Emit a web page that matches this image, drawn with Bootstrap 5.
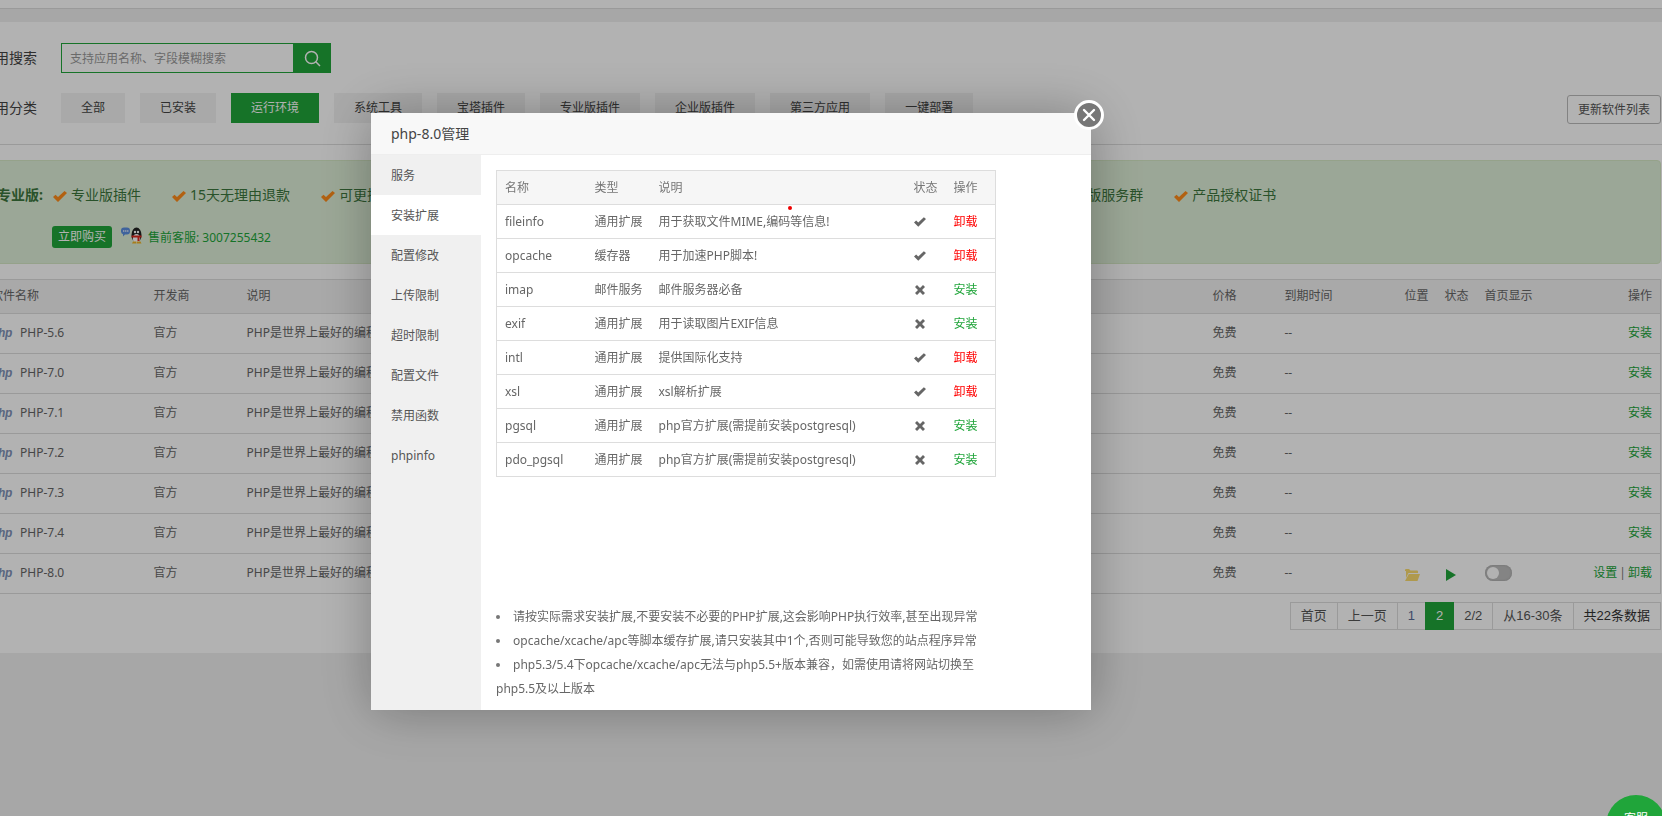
<!DOCTYPE html>
<html lang="zh-CN">
<head>
<meta charset="utf-8">
<title>软件商店</title>
<link href="https://cdn.jsdelivr.net/npm/bootstrap@5.3.0/dist/css/bootstrap.min.css" rel="stylesheet">
<style>
html,body{height:100%;overflow:hidden}
body{background:#f0f0f0;color:#666;font-family:"Noto Sans","Noto Sans CJK SC",sans-serif;font-size:12px;line-height:1.5}
.shell{width:1682px;margin-left:-20px}
.topwrap{height:22px;background:#fff;padding-top:8px}
.topstrip-in{height:14px;background:#f0f0f0;border-top:1px solid #ddd}
.panelmain{background:#fff;padding:21px 1px 23px 2px}
.rowlabel{width:55px;margin-right:24px;font-size:14px;line-height:30px;color:#444;white-space:nowrap;display:flex;justify-content:flex-end}
.catrow{margin-top:20px}
.searchbox{width:270px;height:30px}
.searchfield{width:232px;height:30px;border:1px solid #20a53a;border-right:0;padding:0 8px;line-height:29px;color:#999;background:#fff}
.searchbtn{width:38px;height:30px;background:#20a53a}
.catbtn{height:30px;line-height:30px;padding:0 20px;margin-right:15px;background:#f2f2f2;color:#444}
.catbtn.on{background:#20a53a;color:#fff}
.updbtn{height:29px;line-height:27px;padding:0 10px;margin:2px 0 0;border:1px solid #bbb;border-radius:3px;color:#555}
.sepline{height:1px;background:#ddd;margin:20px -2px 15px}
.promo{height:104px;background:#dff0d8;border:1px solid #d6e9c6;border-radius:4px;padding:22px 0 0 14px;color:#3c763d}
.promorow{font-size:14px;line-height:24px;height:24px}
.promolabel{font-weight:700;width:47px;white-space:nowrap;margin-right:9px}
.perk{margin-right:31px;white-space:nowrap}
.perk svg{width:14px;height:11px;margin-right:4px;fill:#ff8c1a}
.gapper{margin-left:616px}
.promorow2{margin:19px 0 0 55px;height:22px}
.buybtn{height:22px;line-height:22px;width:60px;text-align:center;background:#20a53a;border-radius:3px;color:#fff}
.qqmark{width:24px;height:17px;margin:1px 4px 0 8px}
.qqtext{color:#20a53a;line-height:24px;font-size:12px}
.sft-wrap{margin-top:15px}
.table.sft-table{--bs-table-bg:transparent;--bs-table-color:#666;border-collapse:collapse;table-layout:fixed;width:1679px;margin:0;border:1px solid #ddd}
.table.sft-table th,.table.sft-table td{padding:0 8px 2px;border:0;border-bottom:1px solid #ddd;font-weight:400;white-space:nowrap;overflow:hidden;color:#666;font-size:12px;vertical-align:middle}
.table.sft-table th{height:34px;background:#f2f2f2}
.table.sft-table td{height:40px}
.table.sft-table .okgreen,.okgreen{color:#20a53a}
.phpmark{display:inline-block;width:21px;margin-right:8px;font:italic 700 12px "Liberation Sans",sans-serif;color:#8293b8;white-space:nowrap;letter-spacing:-.3px}
.pipe{color:#777;margin:0 2px}
.foldicon{width:15px;height:12px;display:block;margin-top:5px}
.playicon{width:10px;height:12px;display:block;margin:5px 0 0 1px}
.togglebox{width:27px;height:16px;border-radius:8px;background:#bdbdbd;box-shadow:inset 0 0 2px #999;padding:2px}
.togglebox i{display:block;width:12px;height:12px;border-radius:50%;background:#fff}
.pagerwrap{margin-top:8px}
.pagination.pagerlist{--bs-pagination-font-size:13px;--bs-pagination-padding-x:10px;--bs-pagination-padding-y:0;--bs-pagination-border-color:#ddd;--bs-pagination-color:#555;--bs-pagination-bg:transparent;--bs-pagination-border-radius:0;--bs-pagination-active-bg:#20a53a;--bs-pagination-active-border-color:#20a53a;font-family:"Liberation Sans","Noto Sans CJK SC",sans-serif;line-height:26px}
.pagerlist .page-link{line-height:26px;height:28px;border-radius:0!important}
.pagerlist .bluecell{color:#5a6a95}
.pagerlist .darkcell{color:#333}
.fade-layer{position:fixed;inset:0;background:rgba(0,0,0,.3);z-index:10}
.dlg{position:fixed;left:371px;top:113px;width:720px;height:597px;background:#fff;z-index:20;box-shadow:1px 1px 50px rgba(0,0,0,.3)}
.dlghead{height:42px;line-height:41px;padding-left:20px;background:#f8f8f8;border-bottom:1px solid #eee;color:#444;font-size:14px}
.dlgbody{height:555px}
.sidemenu{width:110px;background:#f0f0f0}
.sideitem{height:40px;line-height:42px;padding-left:20px;color:#555}
.sideitem.on{background:#fff}
.dlgmain{width:610px;padding:15px 15px 9px;position:relative}
.table.ext-table{--bs-table-bg:transparent;border-collapse:collapse;table-layout:fixed;width:500px;margin:0;border:1px solid #ddd}
.table.ext-table th,.table.ext-table td{height:34px;padding:0 8px;border:0;border-bottom:1px solid #ddd;font-weight:400;font-size:12px;color:#666;white-space:nowrap;overflow:hidden;vertical-align:middle}
.table.ext-table th{background:#f6f6f6;color:#777}
.stat{width:12px;height:10px;display:block;fill:#666}
.stat.cross{width:10px;height:10px;margin-left:1px}
.table.ext-table .redtext{color:#f00}
.table.ext-table .inst{color:#20a53a}
.hintlist{list-style:inside disc;margin:0;padding:0;line-height:24px;color:#666;width:500px}
.hintlist li::marker{color:#777}
.reddot{position:absolute;left:307px;top:51px;width:4px;height:4px;border-radius:50%;background:#e00}
.closer{position:fixed;left:1074px;top:100px;width:30px;height:30px;z-index:30;border-radius:50%;background:#777;border:3px solid #fff}
.chatball{position:fixed;left:1606px;top:795px;width:60px;height:60px;z-index:30;border-radius:50%;background:#20a53a;color:#fff;text-align:center;padding-top:16px;font-size:12px;line-height:16px}
</style>
</head>
<body>
<div class="shell">
  <div class="topwrap"><div class="topstrip-in"></div></div>
  <div class="panelmain">
    <div class="d-flex">
      <div class="rowlabel"><span>应用搜索</span></div>
      <div class="searchbox d-flex">
        <div class="searchfield flex-grow-1">支持应用名称、字段模糊搜索</div>
        <div class="searchbtn d-flex align-items-center justify-content-center">
          <svg width="17" height="17" viewBox="0 0 17 17" fill="none" stroke="#fff" stroke-width="1.5"><circle cx="7.5" cy="7.5" r="6"/><path d="M11.8 11.8L16 16"/></svg>
        </div>
      </div>
    </div>
    <div class="d-flex catrow">
      <div class="rowlabel"><span>应用分类</span></div>
      <div class="catbtn">全部</div>
      <div class="catbtn">已安装</div>
      <div class="catbtn on">运行环境</div>
      <div class="catbtn">系统工具</div>
      <div class="catbtn">宝塔插件</div>
      <div class="catbtn">专业版插件</div>
      <div class="catbtn">企业版插件</div>
      <div class="catbtn">第三方应用</div>
      <div class="catbtn">一键部署</div>
      <div class="updbtn ms-auto align-self-start">更新软件列表</div>
    </div>
    <div class="sepline"></div>
    <div class="promo">
      <div class="promorow d-flex">
        <div class="promolabel">专业版:</div>
        <div class="perk"><svg viewBox="0 0 14 11"><path d="M0 6L2.5 3.8L5 6L11.5 0L14 2L5 11Z"/></svg>专业版插件</div>
        <div class="perk"><svg viewBox="0 0 14 11"><path d="M0 6L2.5 3.8L5 6L11.5 0L14 2L5 11Z"/></svg>15天无理由退款</div>
        <div class="perk"><svg viewBox="0 0 14 11"><path d="M0 6L2.5 3.8L5 6L11.5 0L14 2L5 11Z"/></svg>可更换IP</div>
        <div class="perk gapper"><svg viewBox="0 0 14 11"><path d="M0 6L2.5 3.8L5 6L11.5 0L14 2L5 11Z"/></svg>专业版服务群</div>
        <div class="perk"><svg viewBox="0 0 14 11"><path d="M0 6L2.5 3.8L5 6L11.5 0L14 2L5 11Z"/></svg>产品授权证书</div>
      </div>
      <div class="promorow2 d-flex">
        <div class="buybtn">立即购买</div>
        <svg class="qqmark" viewBox="0 0 24 17">
          <path d="M1 3.5a3 3 0 0 1 3-3h3a3 3 0 0 1 3 3v1a3 3 0 0 1-3 3H5L3 9.500V7.300A3 3 0 0 1 1 4.500Z" fill="#5b8fe0"/>
          <circle cx="3.700" cy="4" r=".8" fill="#fff"/><circle cx="5.800" cy="4" r=".8" fill="#fff"/><circle cx="7.800" cy="4" r=".8" fill="#fff"/>
          <ellipse cx="16.500" cy="8" rx="5" ry="7.500" fill="#222"/>
          <ellipse cx="16.500" cy="11.500" rx="3.600" ry="4.500" fill="#fff"/>
          <circle cx="15" cy="5" r="1.200" fill="#fff"/><circle cx="18" cy="5" r="1.200" fill="#fff"/>
          <path d="M13 14.500h3.500v2H12ZM17 14.500h3.500l1 2H17Z" fill="#f0b428"/>
          <path d="M11.500 8.500h10v2h-2v3.500h-2v-3.500h-6Z" fill="#e0281e"/>
        </svg>
        <div class="qqtext">售前客服: 3007255432</div>
      </div>
    </div>
    <div class="sft-wrap">
      <table class="table sft-table">
        <colgroup><col style="width:163px"><col style="width:93px"><col style="width:966px"><col style="width:72px"><col style="width:120px"><col style="width:40px"><col style="width:40px"><col style="width:60px"><col></colgroup>
        <thead><tr><th>软件名称</th><th>开发商</th><th>说明</th><th>价格</th><th>到期时间</th><th>位置</th><th>状态</th><th>首页显示</th><th class="text-end">操作</th></tr></thead>
        <tbody>
          <tr><td><span class="phpmark">php</span>PHP-5.6</td><td>官方</td><td>PHP是世界上最好的编程语言</td><td>免费</td><td>--</td><td></td><td></td><td></td><td class="text-end okgreen">安装</td></tr>
          <tr><td><span class="phpmark">php</span>PHP-7.0</td><td>官方</td><td>PHP是世界上最好的编程语言</td><td>免费</td><td>--</td><td></td><td></td><td></td><td class="text-end okgreen">安装</td></tr>
          <tr><td><span class="phpmark">php</span>PHP-7.1</td><td>官方</td><td>PHP是世界上最好的编程语言</td><td>免费</td><td>--</td><td></td><td></td><td></td><td class="text-end okgreen">安装</td></tr>
          <tr><td><span class="phpmark">php</span>PHP-7.2</td><td>官方</td><td>PHP是世界上最好的编程语言</td><td>免费</td><td>--</td><td></td><td></td><td></td><td class="text-end okgreen">安装</td></tr>
          <tr><td><span class="phpmark">php</span>PHP-7.3</td><td>官方</td><td>PHP是世界上最好的编程语言</td><td>免费</td><td>--</td><td></td><td></td><td></td><td class="text-end okgreen">安装</td></tr>
          <tr><td><span class="phpmark">php</span>PHP-7.4</td><td>官方</td><td>PHP是世界上最好的编程语言</td><td>免费</td><td>--</td><td></td><td></td><td></td><td class="text-end okgreen">安装</td></tr>
          <tr><td><span class="phpmark">php</span>PHP-8.0</td><td>官方</td><td>PHP是世界上最好的编程语言</td><td>免费</td><td>--</td>
            <td><svg class="foldicon" viewBox="0 0 15 12"><path d="M0 2V1a1 1 0 0 1 1-1h3l1.500 1.500H12a1 1 0 0 1 1 1V4H3.500L1 9V2Z M3.800 5H15l-2.500 7H0Z" fill="#fbdc6f"/></svg></td>
            <td><svg class="playicon" viewBox="0 0 10 12"><path d="M0 0L10 6L0 12Z" fill="#20a53a"/></svg></td>
            <td><div class="togglebox"><i></i></div></td>
            <td class="text-end"><span class="okgreen">设置</span><span class="pipe">|</span><span class="okgreen">卸载</span></td></tr>
        </tbody>
      </table>
    </div>
    <div class="pagerwrap d-flex justify-content-end">
      <ul class="pagination pagerlist mb-0">
        <li class="page-item"><span class="page-link">首页</span></li>
        <li class="page-item"><span class="page-link">上一页</span></li>
        <li class="page-item"><span class="page-link bluecell">1</span></li>
        <li class="page-item active"><span class="page-link">2</span></li>
        <li class="page-item"><span class="page-link">2/2</span></li>
        <li class="page-item"><span class="page-link">从16-30条</span></li>
        <li class="page-item"><span class="page-link darkcell">共22条数据</span></li>
      </ul>
    </div>
  </div>
</div>

<div class="fade-layer"></div>

<div class="dlg">
  <div class="dlghead">php-8.0管理</div>
  <div class="dlgbody d-flex">
    <div class="sidemenu">
      <div class="sideitem">服务</div>
      <div class="sideitem on">安装扩展</div>
      <div class="sideitem">配置修改</div>
      <div class="sideitem">上传限制</div>
      <div class="sideitem">超时限制</div>
      <div class="sideitem">配置文件</div>
      <div class="sideitem">禁用函数</div>
      <div class="sideitem">phpinfo</div>
    </div>
    <div class="dlgmain d-flex flex-column justify-content-between">
      <span class="reddot"></span>
      <table class="table ext-table">
        <colgroup><col style="width:90px"><col style="width:64px"><col style="width:255px"><col style="width:40px"><col></colgroup>
        <thead><tr><th>名称</th><th>类型</th><th>说明</th><th>状态</th><th>操作</th></tr></thead>
        <tbody>
          <tr><td>fileinfo</td><td>通用扩展</td><td>用于获取文件MIME,编码等信息!</td><td><svg class="stat" viewBox="0 0 14 11"><path d="M0 6L2.500 3.800L5 6L11.500 0L14 2L5 11Z"/></svg></td><td class="redtext">卸载</td></tr>
          <tr><td>opcache</td><td>缓存器</td><td>用于加速PHP脚本!</td><td><svg class="stat" viewBox="0 0 14 11"><path d="M0 6L2.500 3.800L5 6L11.500 0L14 2L5 11Z"/></svg></td><td class="redtext">卸载</td></tr>
          <tr><td>imap</td><td>邮件服务</td><td>邮件服务器必备</td><td><svg class="stat cross" viewBox="0 0 10 10"><path d="M2 0L5 3L8 0L10 2L7 5L10 8L8 10L5 7L2 10L0 8L3 5L0 2Z"/></svg></td><td class="inst">安装</td></tr>
          <tr><td>exif</td><td>通用扩展</td><td>用于读取图片EXIF信息</td><td><svg class="stat cross" viewBox="0 0 10 10"><path d="M2 0L5 3L8 0L10 2L7 5L10 8L8 10L5 7L2 10L0 8L3 5L0 2Z"/></svg></td><td class="inst">安装</td></tr>
          <tr><td>intl</td><td>通用扩展</td><td>提供国际化支持</td><td><svg class="stat" viewBox="0 0 14 11"><path d="M0 6L2.500 3.800L5 6L11.500 0L14 2L5 11Z"/></svg></td><td class="redtext">卸载</td></tr>
          <tr><td>xsl</td><td>通用扩展</td><td>xsl解析扩展</td><td><svg class="stat" viewBox="0 0 14 11"><path d="M0 6L2.500 3.800L5 6L11.500 0L14 2L5 11Z"/></svg></td><td class="redtext">卸载</td></tr>
          <tr><td>pgsql</td><td>通用扩展</td><td>php官方扩展(需提前安装postgresql)</td><td><svg class="stat cross" viewBox="0 0 10 10"><path d="M2 0L5 3L8 0L10 2L7 5L10 8L8 10L5 7L2 10L0 8L3 5L0 2Z"/></svg></td><td class="inst">安装</td></tr>
          <tr><td>pdo_pgsql</td><td>通用扩展</td><td>php官方扩展(需提前安装postgresql)</td><td><svg class="stat cross" viewBox="0 0 10 10"><path d="M2 0L5 3L8 0L10 2L7 5L10 8L8 10L5 7L2 10L0 8L3 5L0 2Z"/></svg></td><td class="inst">安装</td></tr>
        </tbody>
      </table>
      <ul class="hintlist">
        <li>请按实际需求安装扩展,不要安装不必要的PHP扩展,这会影响PHP执行效率,甚至出现异常</li>
        <li>opcache/xcache/apc等脚本缓存扩展,请只安装其中1个,否则可能导致您的站点程序异常</li>
        <li>php5.3/5.4下opcache/xcache/apc无法与php5.5+版本兼容，如需使用请将网站切换至php5.5及以上版本</li>
      </ul>
    </div>
  </div>
</div>
<div class="closer d-flex align-items-center justify-content-center">
  <svg width="14" height="14" viewBox="0 0 14 14" stroke="#fff" stroke-width="2.400" stroke-linecap="round"><path d="M2 2L12 12M12 2L2 12"/></svg>
</div>
<div class="chatball">客服</div>
</body>
</html>
